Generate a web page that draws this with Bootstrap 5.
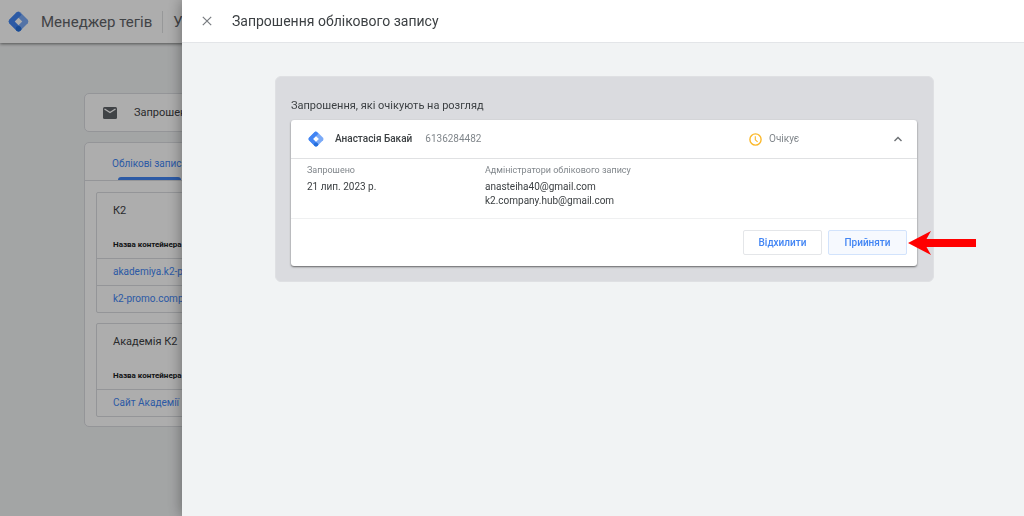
<!DOCTYPE html>
<html lang="uk">
<head>
<meta charset="utf-8">
<meta name="viewport" content="width=device-width, initial-scale=1">
<title>Менеджер тегів</title>
<link rel="stylesheet" href="https://cdn.jsdelivr.net/npm/bootstrap@5.3.0/dist/css/bootstrap.min.css">
<style>
  body { font-family: Roboto, "Liberation Sans", sans-serif; font-size: 10px; line-height: 14px; color: #3c4043; background: #f1f3f4; min-height: 100vh; overflow: hidden; }
  a { color: #4285f4; text-decoration: none; }
  .topbar { height: 43px; background: #fff; padding: 0 8px; box-shadow: 0 1px 3px rgba(0,0,0,.5); position: relative; }
  .brand { font-size: 15px; line-height: 20px; color: #5f6368; white-space: nowrap; }
  .topbar .vr { height: 22px; margin: 0 10px; align-self: center; color: #80868b; }
  .home { padding: 50px 84px 0; }
  .panel { background: #fff; border: 1px solid #dadce0; border-radius: 5px; }
  .panel + .panel { margin-top: 10px; }
  .notice { height: 39px; padding: 0 17px; gap: 16px; font-size: 11px; }
  .tabs { height: 38px; padding: 0 27px; border-bottom: 1px solid #dadce0; }
  .tabs a { font-size: 10px; position: relative; line-height: 42px; height: 37px; white-space: nowrap; }
  .tabs a::after { content: ""; position: absolute; left: 6px; right: 6px; bottom: 0; height: 3px; border-radius: 3px 3px 0 0; background: #4285f4; }
  .accounts { padding: 11px 11px 9px; gap: 10px; }
  .account { border: 1px solid #dadce0; border-radius: 2px; }
  .account h2 { font-size: 11px; line-height: 16px; padding: 10px 16px 0; margin: 0; font-weight: 400; }
  .account table { width: 100%; margin-top: 18px; }
  .account th { font-size: 8px; line-height: 12px; padding: 2px 16px 7px; color: #202124; font-weight: 700; }
  .account td { font-size: 10px; line-height: 14px; padding: 6px 16px; border-top: 1px solid #dadce0; }
  .scrim { position: fixed; inset: 0; background: rgba(0,0,0,.32); }
  .sheet { position: fixed; top: 0; bottom: 0; right: 0; left: 182px; background: #f1f3f4; box-shadow: 0 0 14px rgba(0,0,0,.4); }
  .sheet-head { height: 43px; background: #fff; border-bottom: 1px solid #e3e5e8; padding: 0 20px; gap: 20px; }
  .sheet-head h1 { font-size: 14px; line-height: 20px; margin: 0; font-weight: 400; }
  .plain { border: 0; background: none; padding: 0; display: flex; }
  .sheet-body { padding: 33px 90px 16px 93px; }
  .pending { background: #dadbdf; border: 1px solid #dfe0e3; border-radius: 6px; padding: 21px 16px 15px 15px; }
  .pending h2 { font-size: 11px; line-height: 16px; margin: 0 0 6px; font-weight: 400; }
  .invite { background: #fff; border-radius: 3px; box-shadow: 0 1px 2px rgba(0,0,0,.55); }
  .invite-head { height: 39px; padding: 0 13px 0 17px; border-bottom: 1px solid #e0e1e3; }
  .muted { color: #80868b; }
  .name { font-size: 10px; margin: 0 13px 0 11px; color: #3c4043; font-weight: 500; }
  .status { gap: 7px; width: 143px; }
  .details { padding: 4px 16px 11px; height: 60px; color: #3c4043; border-bottom: 1px solid #eff0f1; }
  .details dl { margin: 0; width: 178px; }
  .details dt { font-size: 9px; font-weight: 400; color: #80868b; margin-bottom: 3px; white-space: nowrap; }
  .details dd { margin: 0; white-space: nowrap; }
  .actions { height: 47px; padding: 0 10px; gap: 6px; position: relative; }
  .actions .btn { width: 79px; height: 25px; padding: 0; font-size: 10px; line-height: 14px; font-weight: 500; color: #4285f4; background: #fff; border: 1px solid #e4e6e9; border-radius: 2px; }
  .actions .btn.accept { background: #f6f9fe; border-color: #d2e3fc; }
  .pointer { position: absolute; right: -60px; top: 11px; }
</style>
</head>
<body>
<svg width="0" height="0" class="position-absolute" aria-hidden="true">
  <symbol id="logo" viewBox="0 0 24 24">
    <path d="M10 1.400Q12 0 14 1.400L22.600 10Q24 12 22.600 14L14 22.600Q12 24 10 22.600L1.400 14Q0 12 1.400 10Z" fill="#7baaf7"/>
    <path d="M10 1.400Q11.500 .3 13 1.400L15.500 4.200 8 12 16 20.500 14 22.600Q12 24 10 22.600L1.400 14Q0 12 1.400 10Z" fill="#4285f4"/>
    <circle cx="12" cy="20.200" r="3.100" fill="#246fdb"/>
    <path d="M12 7.700 16.300 12 12 16.300 7.700 12Z" fill="#fff"/>
  </symbol>
</svg>

<header class="topbar d-flex align-items-center">
  <svg width="21" height="21" aria-hidden="true"><use href="#logo"/></svg>
  <span class="brand ms-2 ps-1">Менеджер тегів</span>
  <span class="vr"></span>
  <span class="brand">Ус</span>
</header>

<main class="home">
  <div class="panel notice d-flex align-items-center">
    <svg width="16" height="12" viewBox="0 0 16 12" aria-hidden="true"><rect x="1" width="14" height="12" rx="1.500" fill="#5f6368"/><path d="M2.500 2 8 5.500 13.500 2" fill="none" stroke="#fff" stroke-width="1.400"/></svg>
    <span>Запрошення</span>
  </div>
  <section class="panel">
    <nav class="tabs"><a href="#" class="d-inline-block">Облікові записи</a></nav>
    <div class="accounts d-grid">
      <section class="account">
        <h2>К2</h2>
        <table>
          <thead><tr><th>Назва контейнера</th></tr></thead>
          <tbody>
            <tr><td><a href="#">akademiya.k2-p</a></td></tr>
            <tr><td><a href="#">k2-promo.comp</a></td></tr>
          </tbody>
        </table>
      </section>
      <section class="account">
        <h2>Академія К2</h2>
        <table>
          <thead><tr><th>Назва контейнера</th></tr></thead>
          <tbody><tr><td><a href="#">Сайт Академії</a></td></tr></tbody>
        </table>
      </section>
    </div>
  </section>
</main>

<div class="scrim"></div>

<div class="sheet" role="dialog" aria-labelledby="sheet-title">
  <div class="sheet-head d-flex align-items-center">
    <button type="button" class="plain" aria-label="Закрити"><svg width="10" height="10" viewBox="0 0 10 10"><path d="M.8.800 9.200 9.200M9.200.800.800 9.200" stroke="#777b7f" stroke-width="1.200"/></svg></button>
    <h1 id="sheet-title">Запрошення облікового запису</h1>
  </div>
  <div class="sheet-body">
    <section class="pending">
      <h2>Запрошення, які очікують на розгляд</h2>
      <article class="invite">
        <div class="invite-head d-flex align-items-center">
          <svg width="16" height="16" aria-hidden="true"><use href="#logo"/></svg>
          <span class="name">Анастасія Бакай</span>
          <span class="muted">6136284482</span>
          <div class="status d-flex align-items-center ms-auto muted">
            <svg width="13" height="13" viewBox="0 0 13 13" fill="none" stroke="#fbb829" aria-hidden="true"><circle cx="6.500" cy="6.500" r="5.600" stroke-width="1.400"/><path d="M6.300 3.200V6.800L8.600 8.900" stroke-width="1.100"/></svg>
            <span>Очікує</span>
          </div>
          <button type="button" class="plain" aria-label="Згорнути"><svg width="12" height="12" viewBox="0 0 12 12"><path d="M2.500 8 6 4.500 9.500 8" fill="none" stroke="#6b6f73" stroke-width="1.400"/></svg></button>
        </div>
        <div class="details d-flex">
          <dl><dt>Запрошено</dt><dd>21 лип. 2023 р.</dd></dl>
          <dl><dt>Адміністратори облікового запису</dt><dd>anasteiha40@gmail.com</dd><dd>k2.company.hub@gmail.com</dd></dl>
        </div>
        <div class="actions d-flex align-items-center justify-content-end">
          <button type="button" class="btn">Відхилити</button>
          <button type="button" class="btn accept">Прийняти</button>
          <svg class="pointer" width="70" height="26" viewBox="0 0 70 26" aria-hidden="true"><path d="M1 13 24 1 19.500 9H69V17H19.500L24 25Z" fill="#f00"/></svg>
        </div>
      </article>
    </section>
  </div>
</div>
<script src="https://cdn.jsdelivr.net/npm/bootstrap@5.3.0/dist/js/bootstrap.bundle.min.js"></script>
</body>
</html>
